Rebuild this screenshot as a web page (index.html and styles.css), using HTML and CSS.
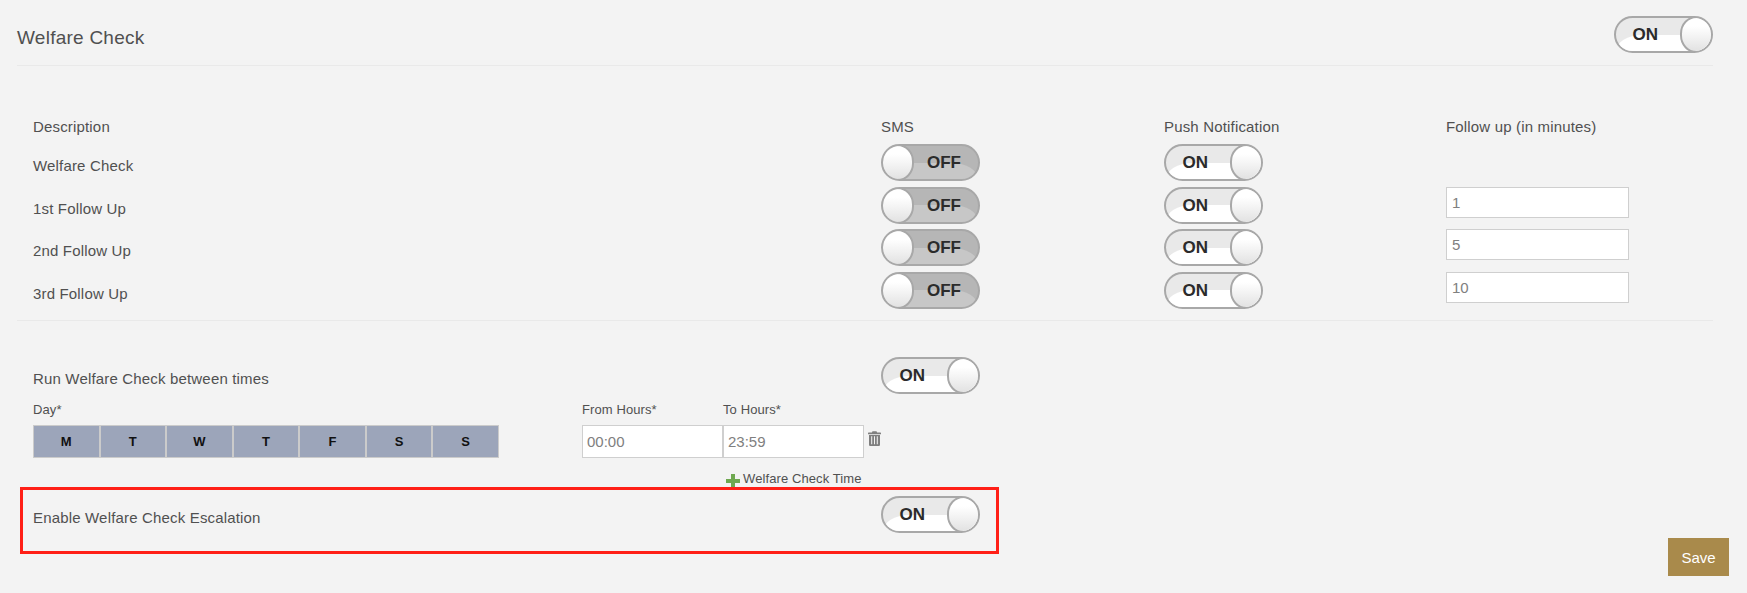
FILE: index.html
```html
<!DOCTYPE html>
<html lang="en">
<head>
<meta charset="utf-8">
<title>Welfare Check</title>
<link rel="stylesheet" href="styles.css">
</head>
<body>
<div class="page">
  <header class="head">
    <h1 class="title">Welfare Check</h1>
    <span class="toggle on"><span class="toggle-text">ON</span><span class="knob"></span></span>
  </header>

  <section class="table">
    <div class="cell head-cell">Description</div>
    <div class="cell head-cell">SMS</div>
    <div class="cell head-cell">Push Notification</div>
    <div class="cell head-cell">Follow up (in minutes)</div>

    <div class="cell label">Welfare Check</div>
    <div class="cell"><span class="toggle off"><span class="knob"></span><span class="toggle-text">OFF</span></span></div>
    <div class="cell"><span class="toggle on"><span class="toggle-text">ON</span><span class="knob"></span></span></div>
    <div class="cell"></div>

    <div class="cell label">1st Follow Up</div>
    <div class="cell"><span class="toggle off"><span class="knob"></span><span class="toggle-text">OFF</span></span></div>
    <div class="cell"><span class="toggle on"><span class="toggle-text">ON</span><span class="knob"></span></span></div>
    <div class="cell"><input class="field minutes" type="text" placeholder="1"></div>

    <div class="cell label">2nd Follow Up</div>
    <div class="cell"><span class="toggle off"><span class="knob"></span><span class="toggle-text">OFF</span></span></div>
    <div class="cell"><span class="toggle on"><span class="toggle-text">ON</span><span class="knob"></span></span></div>
    <div class="cell"><input class="field minutes" type="text" placeholder="5"></div>

    <div class="cell label">3rd Follow Up</div>
    <div class="cell"><span class="toggle off"><span class="knob"></span><span class="toggle-text">OFF</span></span></div>
    <div class="cell"><span class="toggle on"><span class="toggle-text">ON</span><span class="knob"></span></span></div>
    <div class="cell"><input class="field minutes" type="text" placeholder="10"></div>
  </section>

  <section class="times">
    <div class="run-row">
      <div class="run-label">Run Welfare Check between times</div>
      <span class="toggle on"><span class="toggle-text">ON</span><span class="knob"></span></span>
    </div>
    <div class="slot">
      <div class="day-group">
        <div class="small-label">Day*</div>
        <div class="days">
          <span class="day">M</span><span class="day">T</span><span class="day">W</span><span class="day">T</span><span class="day">F</span><span class="day">S</span><span class="day">S</span>
        </div>
      </div>
      <div class="hour-group">
        <div class="small-label">From Hours*</div>
        <input class="field hour" type="text" placeholder="00:00">
      </div>
      <div class="hour-group">
        <div class="small-label">To Hours*</div>
        <input class="field hour" type="text" placeholder="23:59">
      </div>
      <svg class="trash" viewBox="0 0 13 15" width="13" height="15" aria-hidden="true">
        <path fill="#7f7f7f" d="M4.500 0.300h4l.6 1.300H12.400a.6.6 0 0 1 .6.6v1H0v-1a.6.6 0 0 1 .6-.6h3.300z"/>
        <path fill="#7f7f7f" fill-rule="evenodd" d="M1 4h11v9.400c0 .9-.6 1.600-1.500 1.600h-8C1.600 15 1 14.300 1 13.400zM3.200 5.300v8h1v-8zM6 5.300v8h1v-8zM8.800 5.300v8h1v-8z"/>
      </svg>
    </div>
    <div class="add-row">
      <svg class="plus" viewBox="0 0 14 14" width="14" height="14" aria-hidden="true">
        <path fill="#6fa850" d="M5 0h4v5h5v4H9v5H5V9H0V5h5z"/>
      </svg>
      <span class="add-text">Welfare Check Time</span>
    </div>
  </section>

  <section class="foot">
    <div class="escalation">
      <div class="escalation-label">Enable Welfare Check Escalation</div>
      <span class="toggle on"><span class="toggle-text">ON</span><span class="knob"></span></span>
    </div>
    <button class="save" type="button">Save</button>
  </section>
</div>
</body>
</html>
```
FILE: styles.css
```css
* { box-sizing: border-box; }
html, body { margin: 0; padding: 0; }
body {
  background: #f3f3f3;
  color: #505050;
  font-family: "Liberation Sans", Arial, sans-serif;
  font-size: 15px;
  letter-spacing: 0.17px;
  height: 593px;
  overflow: hidden;
}
.page { padding: 0 18px 0 17px; }

.head {
  display: flex;
  justify-content: space-between;
  align-items: flex-start;
  height: 66px;
  padding-top: 16px;
  margin-right: 16px;
  border-bottom: 1px solid #e9e9e9;
}
.title {
  margin: 0;
  font-size: 19px;
  font-weight: 400;
  letter-spacing: 0.25px;
  line-height: 44px;
}

.toggle {
  position: relative;
  display: flex;
  align-items: center;
  flex: none;
  width: 99px;
  height: 37px;
  border: 2px solid #a8a8a8;
  border-radius: 19px;
  overflow: hidden;
  letter-spacing: 0;
}
.toggle::before {
  content: "";
  position: absolute;
  left: 0;
  right: 0;
  bottom: 0;
  height: 50%;
}
.toggle.on { background: #e9e9e9; justify-content: space-between; }
.toggle.on::before { background: #fff; border-top-left-radius: 26px 16px; }
.toggle.off { background: #b6b6b6; }
.toggle.off::before { background: #c7c7c7; border-top-right-radius: 26px 16px; }
.toggle-text {
  position: relative;
  font-size: 17px;
  font-weight: 700;
  line-height: 1;
  color: #2b2b2b;
}
.toggle.on .toggle-text { margin-left: 16.500px; }
.toggle.off .toggle-text { margin-left: 15px; }
.knob {
  position: relative;
  flex: none;
  width: 33px;
  height: 37px;
  margin: -2px;
  border: 2px solid #a8a8a8;
  border-radius: 17px / 18px;
  background: linear-gradient(#fff 25%, #e2e2e2);
}

.table {
  display: grid;
  grid-template-columns: 848px 283px 282px 1fr;
  grid-template-rows: 78px repeat(4, 42.67px);
  padding-left: 16px;
  margin-right: 16px;
  height: 255px;
  border-bottom: 1px solid #e9e9e9;
}
.head-cell { padding-top: 52px; line-height: 18px; white-space: nowrap; }
.label { padding-top: 13px; line-height: 18px; }
.field {
  display: block;
  border: 1px solid #cfcfcf;
  background: #fff;
  font-family: "Liberation Sans", Arial, sans-serif;
  font-size: 15px;
  color: #777;
  outline: none;
  border-radius: 0;
}
.field::placeholder { color: #808080; opacity: 1; }
.minutes { width: 183px; height: 31px; padding: 0 5px; }

.times { padding-left: 16px; }
.run-row {
  display: flex;
  justify-content: space-between;
  width: 947px;
  padding-top: 36px;
  height: 72px;
}
.run-label { line-height: 44px; white-space: nowrap; }
.slot { display: flex; align-items: flex-end; height: 65px; padding-top: 8px; }
.small-label { font-size: 13px; line-height: 18px; height: 24px; letter-spacing: 0.1px; }
.day-group { width: 466px; margin-right: 83px; }
.days {
  display: grid;
  grid-template-columns: repeat(7, 1fr);
  height: 33px;
}
.day {
  display: flex;
  align-items: center;
  justify-content: center;
  background: #9ca5ba;
  border: 1px solid #cbcbcb;
  font-size: 13px;
  font-weight: 700;
  color: #111;
}
.hour-group { width: 141px; }
.hour { width: 141px; height: 33px; padding: 0 4px; }
.trash { align-self: flex-start; margin: 30px 0 0 4px; }

.add-row {
  display: flex;
  align-items: flex-start;
  height: 29px;
  padding: 14px 0 0 693px;
}
.plus { margin-top: 2px; }
.add-text { font-size: 13px; line-height: 14px; margin-left: 3px; white-space: nowrap; letter-spacing: 0.1px; }

.foot {
  display: flex;
  justify-content: space-between;
  align-items: flex-start;
  height: 89px;
  padding-left: 3px;
}
.escalation {
  display: flex;
  justify-content: space-between;
  width: 979px;
  height: 67px;
  padding: 6px 16px 0 10px;
  border: 3px solid #ff1f17;
}
.escalation-label { line-height: 44px; white-space: nowrap; }
.save {
  align-self: flex-end;
  width: 61px;
  height: 38px;
  border: 0;
  background: #a98a4b;
  color: #fff;
  font-family: "Liberation Sans", Arial, sans-serif;
  font-size: 15px;
  padding: 0;
}
```
